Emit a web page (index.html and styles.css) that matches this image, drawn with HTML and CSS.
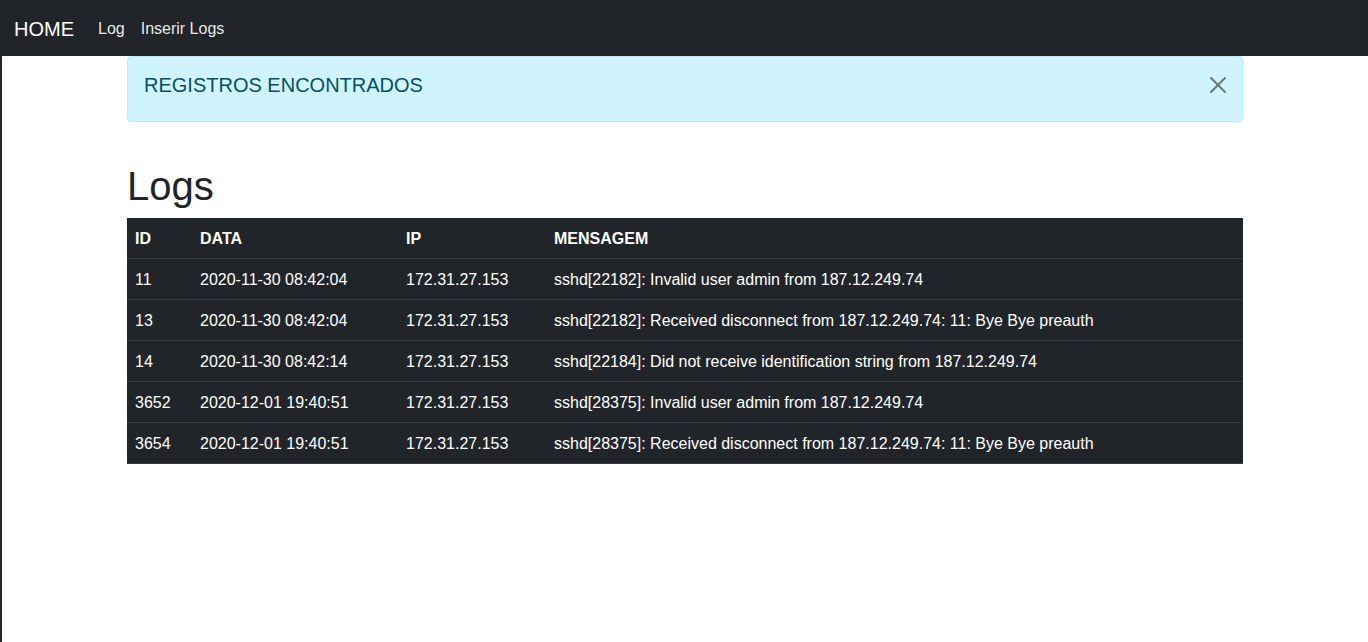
FILE: index.html
```html
<!DOCTYPE html>
<html lang="pt">
<head>
<meta charset="utf-8">
<title>Logs</title>
<link rel="stylesheet" href="styles.css">
</head>
<body>
<nav class="navbar">
  <a class="brand" href="#">HOME</a>
  <a class="nav-link" href="#">Log</a>
  <a class="nav-link" href="#">Inserir Logs</a>
</nav>
<div class="container">
  <div class="alert">
    <h5 class="alert-title">REGISTROS ENCONTRADOS</h5>
    <button class="btn-close" type="button" aria-label="Close">
      <svg viewBox="0 0 16 16" width="16" height="16"><path fill="#000" d="M.293.293a1 1 0 011.414 0L8 6.586 14.293.293a1 1 0 111.414 1.414L9.414 8l6.293 6.293a1 1 0 01-1.414 1.414L8 9.414l-6.293 6.293a1 1 0 01-1.414-1.414L6.586 8 .293 1.707a1 1 0 010-1.414z"/></svg>
    </button>
  </div>
  <br>
  <h1 class="title">Logs</h1>
  <table class="table">
    <thead>
      <tr><th class="c-id">ID</th><th class="c-date">DATA</th><th class="c-ip">IP</th><th>MENSAGEM</th></tr>
    </thead>
    <tbody>
      <tr><td>11</td><td>2020-11-30 08:42:04</td><td>172.31.27.153</td><td>sshd[22182]: Invalid user admin from 187.12.249.74</td></tr>
      <tr><td>13</td><td>2020-11-30 08:42:04</td><td>172.31.27.153</td><td>sshd[22182]: Received disconnect from 187.12.249.74: 11: Bye Bye preauth</td></tr>
      <tr><td>14</td><td>2020-11-30 08:42:14</td><td>172.31.27.153</td><td>sshd[22184]: Did not receive identification string from 187.12.249.74</td></tr>
      <tr><td>3652</td><td>2020-12-01 19:40:51</td><td>172.31.27.153</td><td>sshd[28375]: Invalid user admin from 187.12.249.74</td></tr>
      <tr><td>3654</td><td>2020-12-01 19:40:51</td><td>172.31.27.153</td><td>sshd[28375]: Received disconnect from 187.12.249.74: 11: Bye Bye preauth</td></tr>
    </tbody>
  </table>
</div>
</body>
</html>
```
FILE: styles.css
```css
*, *::before, *::after {
  box-sizing: border-box;
}
html, body {
  margin: 0;
  padding: 0;
}
body {
  font-family: "Liberation Sans", Arial, sans-serif;
  font-size: 16px;
  line-height: 1.5;
  color: #212529;
  background: #fff;
  border-left: 2px solid #212529;
  min-height: 642px;
}
.navbar {
  background: #212529;
  height: 56px;
  display: flex;
  align-items: center;
  padding: 1px 16px 0 14px;
  margin-left: -2px;
}
.brand {
  color: #fff;
  font-size: 20px;
  text-decoration: none;
  margin-right: 16px;
  line-height: 30px;
}
.nav-link {
  color: rgba(255,255,255,0.92);
  text-decoration: none;
  padding: 8px 8px;
}
.container {
  max-width: 1140px;
  margin: 0 auto;
  padding: 0 12px;
}
.alert {
  position: relative;
  background: #cff4fc;
  border: 1px solid #b6effb;
  color: #055160;
  border-radius: 4px;
  padding: 16px 48px 16px 16px;
  margin-bottom: 16px;
}
.alert-title {
  margin: 0 0 8px;
  font-size: 20px;
  font-weight: 400;
  line-height: 1.2;
}
.btn-close {
  position: absolute;
  top: 0;
  right: 0;
  padding: 20px 16px;
  border: 0;
  background: transparent;
  opacity: 0.5;
  line-height: 0;
}
.btn-close svg {
  display: block;
  width: 16px;
  height: 16px;
}
.title {
  margin: 0 0 8px;
  font-size: 40px;
  font-weight: 400;
  line-height: 1.2;
}
.table {
  width: 100%;
  border-collapse: collapse;
  background: #212529;
  color: #fff;
}
.table th, .table td {
  text-align: left;
  padding: 9px 8px 7px;
  border-bottom: 1px solid #373b3e;
  vertical-align: top;
}
.table th { font-weight: 700; }
.c-id { width: 65px; }
.c-date { width: 206px; }
.c-ip { width: 148px; }
```
